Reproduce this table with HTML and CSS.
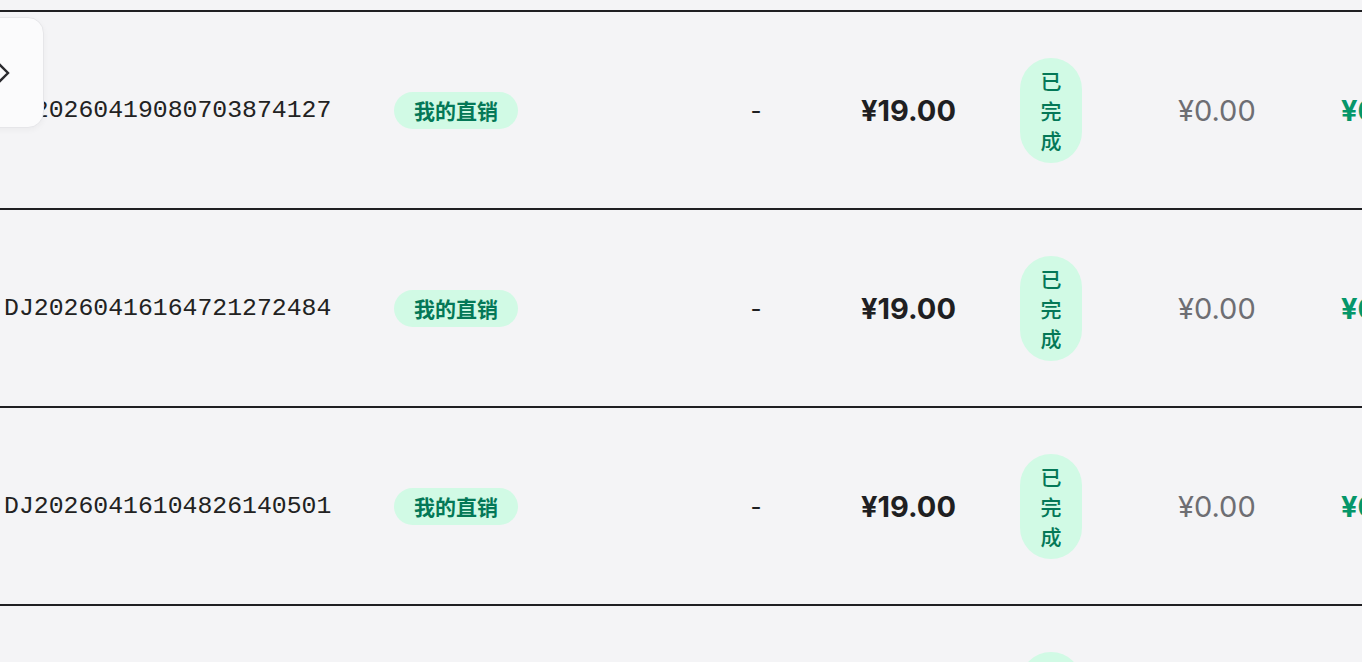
FILE: index.html
```html
<!DOCTYPE html>
<html lang="zh-CN">
<head>
  <meta charset="UTF-8" />
  <title>订单列表</title>
  <link rel="stylesheet" href="styles.css">
</head>
<body>

  <button class="recolher" aria-label="展开">
    <svg width="14" height="22" viewBox="0 0 14 22"><path d="M2 2 L11 11 L2 20" fill="none" stroke="#2a2a2e" stroke-width="2.4" stroke-linejoin="miter"/></svg>
  </button>

  <div class="lista">
    <div class="linha">
      <div class="c-no">DJ20260419080703874127</div>
      <div class="c-tipo"><span class="tag">我的直销</span></div>
      <div class="c-traco">-</div>
      <div class="c-valor">¥19.00</div>
      <div class="c-status"><span class="status">已完成</span></div>
      <div class="c-taxa">¥0.00</div>
      <div class="c-ganho">¥0.00</div>
    </div>
    <div class="linha">
      <div class="c-no">DJ20260416164721272484</div>
      <div class="c-tipo"><span class="tag">我的直销</span></div>
      <div class="c-traco">-</div>
      <div class="c-valor">¥19.00</div>
      <div class="c-status"><span class="status">已完成</span></div>
      <div class="c-taxa">¥0.00</div>
      <div class="c-ganho">¥0.00</div>
    </div>
    <div class="linha">
      <div class="c-no">DJ20260416104826140501</div>
      <div class="c-tipo"><span class="tag">我的直销</span></div>
      <div class="c-traco">-</div>
      <div class="c-valor">¥19.00</div>
      <div class="c-status"><span class="status">已完成</span></div>
      <div class="c-taxa">¥0.00</div>
      <div class="c-ganho">¥0.00</div>
    </div>
    <div class="linha">
      <div class="c-no">DJ20260415093512880316</div>
      <div class="c-tipo"><span class="tag">我的直销</span></div>
      <div class="c-traco">-</div>
      <div class="c-valor">¥19.00</div>
      <div class="c-status"><span class="status">已完成</span></div>
      <div class="c-taxa">¥0.00</div>
      <div class="c-ganho">¥0.00</div>
    </div>
  </div>

</body>
</html>
```

FILE: styles.css
```css
body {
  font-family: Inter, 'Noto Sans CJK SC', sans-serif;
  background: #f4f4f6;
  margin: 0;
  padding: 10px 0 0;
  overflow: hidden;
  color: #1f1f22;
}

.recolher {
  position: absolute;
  left: -22px;
  top: 17px;
  width: 66px;
  height: 111px;
  background: #fbfbfc;
  border: 1px solid #e6e6e9;
  border-radius: 16px;
  box-shadow: 0 2px 6px rgba(0,0,0,0.04);
  display: flex;
  align-items: center;
  justify-content: flex-start;
  padding: 0 0 0 18px;
  z-index: 2;
}

.lista {
  width: 1600px;
}

.linha {
  display: flex;
  align-items: center;
  height: 196px;
  border-top: 2px solid #1f1f22;
}

.linha > div {
  flex: none;
}

.c-no {
  width: 390px;
  padding-left: 4px;
  font-family: 'Liberation Mono', monospace;
  font-size: 24.8px;
  color: #222;
}

.c-tipo {
  width: 336px;
}

.tag {
  display: inline-block;
  background: #d1fae5;
  color: #047857;
  font-size: 21px;
  font-weight: 600;
  line-height: 37px;
  height: 37px;
  padding: 0 20px;
  border-radius: 19px;
  font-family: 'Noto Sans CJK SC', sans-serif;
}

.c-traco {
  width: 52px;
  text-align: center;
  font-size: 24px;
}

.c-valor {
  width: 159px;
  padding-left: 79px;
  font-size: 29px;
  font-weight: 700;
}

.c-status {
  width: 158px;
}

.status {
  display: block;
  width: 22px;
  background: #d1fae5;
  color: #047857;
  font-family: 'Noto Sans CJK SC', sans-serif;
  font-size: 21px;
  font-weight: 500;
  line-height: 30px;
  padding: 7px 20px 8px;
  border-radius: 32px;
  text-align: center;
}

.c-taxa {
  width: 163px;
  font-size: 29px;
  color: #6e6e73;
}

.c-ganho {
  font-size: 29px;
  font-weight: 700;
  color: #059669;
}
```
